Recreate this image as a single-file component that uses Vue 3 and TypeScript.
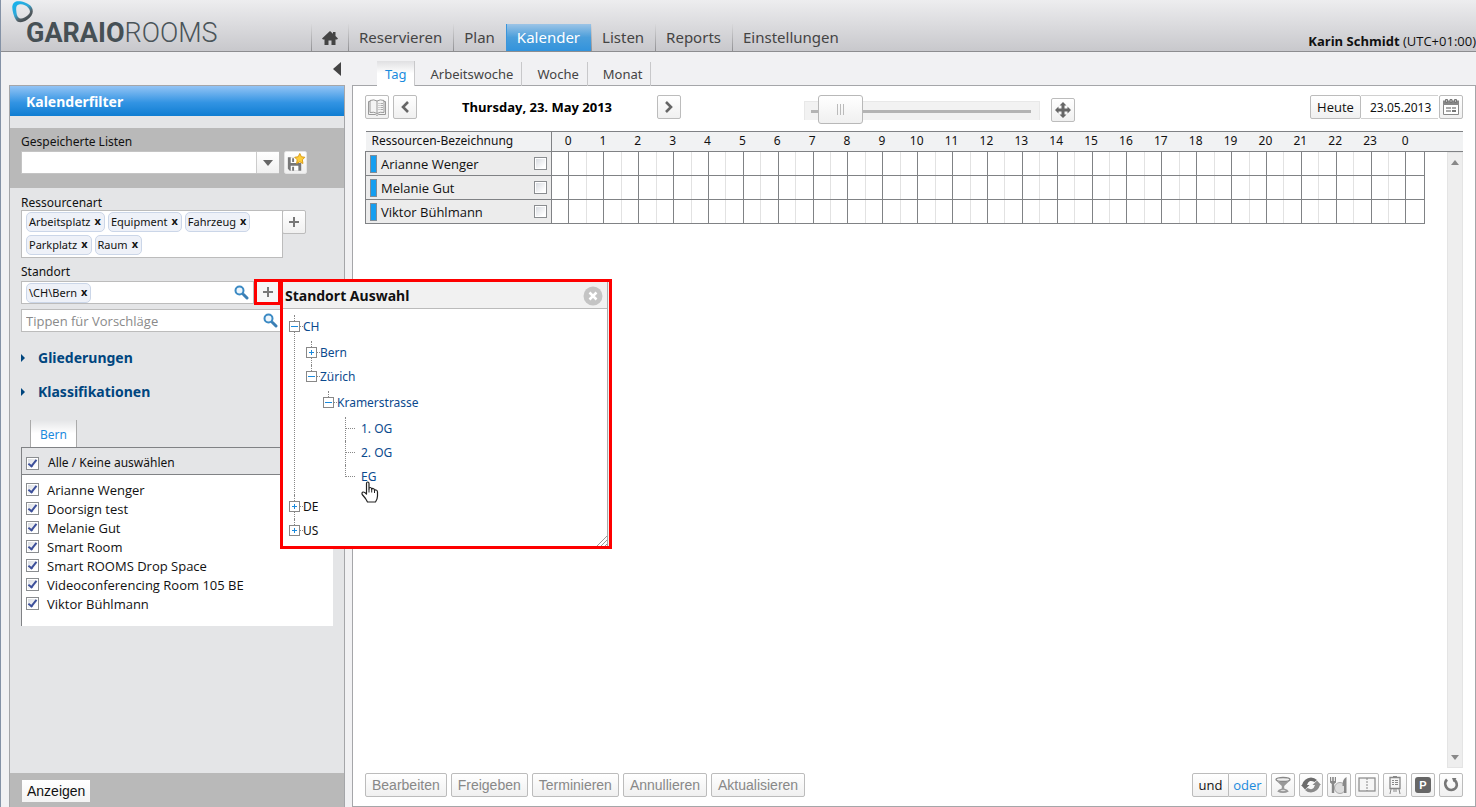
<script setup lang="ts">
import { ref } from 'vue'

interface ResourceItem { name: string; checked: boolean }

const navItems = ['Reservieren', 'Plan', 'Kalender', 'Listen', 'Reports', 'Einstellungen']
const activeNav = ref('Kalender')
const viewTabs = ['Tag', 'Arbeitswoche', 'Woche', 'Monat']
const activeView = ref('Tag')

const types = ref(['Arbeitsplatz', 'Equipment', 'Fahrzeug', 'Parkplatz', 'Raum'])
const places = ref(['\\CH\\Bern'])

const allSelected = ref(true)
const items = ref<ResourceItem[]>([
  { name: 'Arianne Wenger', checked: true },
  { name: 'Doorsign test', checked: true },
  { name: 'Melanie Gut', checked: true },
  { name: 'Smart Room', checked: true },
  { name: 'Smart ROOMS Drop Space', checked: true },
  { name: 'Videoconferencing Room 105 BE', checked: true },
  { name: 'Viktor Bühlmann', checked: true },
])

const rows = ref<ResourceItem[]>([
  { name: 'Arianne Wenger', checked: false },
  { name: 'Melanie Gut', checked: false },
  { name: 'Viktor Bühlmann', checked: false },
])
const hours = Array.from({ length: 25 }, (_, i) => i % 24)
const zoomLevel = ref(7)
const dateText = ref('23.05.2013')
const suggestion = ref('')
const savedList = ref('')
const popupOpen = ref(true)
const actions = ['Bearbeiten', 'Freigeben', 'Terminieren', 'Annullieren', 'Aktualisieren']

function toggleAll() {
  items.value.forEach((i) => { i.checked = allSelected.value })
}
function removeFrom(list: string[], name: string) {
  const at = list.indexOf(name)
  if (at >= 0) list.splice(at, 1)
}
</script>

<template>
  <div class="app">
    <header class="header">
      <a class="logo" href="#" aria-label="Garaio Rooms">
        <svg class="logo-mark" width="22" height="22" viewBox="0 0 22 22">
          <defs>
            <linearGradient id="ring" x1="0" y1="0" x2="0.7" y2="1">
              <stop offset="0" stop-color="#12b4f0" />
              <stop offset="0.5" stop-color="#2fa8d8" />
              <stop offset="0.75" stop-color="#566066" />
              <stop offset="1" stop-color="#3c4448" />
            </linearGradient>
          </defs>
          <path fill="url(#ring)" fill-rule="evenodd" d="M4 .6C8-.4 16 1.500 19.500 6C22.500 10.500 20 15.500 15.500 18.500C11 21.800 6 22.300 4 19C1.500 15 .1 9 .3 5.500C.6 3 2 1.200 4 .6ZM7 3.600C4.500 4.300 4 6 4.200 9C4.500 13 5 15.800 7 17C9.500 18.500 13 16.800 15.800 14.300C18.500 12 18.600 9.600 16.400 7C13.800 4 10 2.800 7 3.600Z" />
        </svg>
        <span class="logo-text"><b>GARAIO</b>ROOMS</span>
      </a>
      <nav class="nav">
        <a class="nav-item home" href="#" aria-label="Home">
          <svg width="16" height="16" viewBox="0 0 16 16"><path fill="#444" d="M8 1L0 8.500L1 9.500H2.500V15H6.500V10.500H9.500V15H13.500V9.500H15L16 8.500L13.500 6V2H11V3.800Z" /></svg>
        </a>
        <a v-for="n in navItems" :key="n" class="nav-item" :class="{ active: n === activeNav }" href="#" @click.prevent="activeNav = n">{{ n }}</a>
      </nav>
      <div class="user"><b>Karin Schmidt</b> (UTC+01:00)</div>
    </header>

    <div class="body">
      <div class="left">
        <div class="left-top">
          <button class="collapse" aria-label="Filter einklappen">
            <svg width="8" height="14" viewBox="0 0 8 14"><path fill="#444" d="M8 0V14L0 7Z" /></svg>
          </button>
        </div>
        <aside class="sidebar">
          <h2 class="side-title">Kalenderfilter</h2>
          <div class="saved">
            <label class="label" for="saved">Gespeicherte Listen</label>
            <div class="line">
              <div class="select-wrap">
                <select id="saved" v-model="savedList" class="select"><option value=""></option></select>
                <span class="select-arrow"><svg width="10" height="6" viewBox="0 0 10 6"><path fill="#666" d="M0 0H10L5 6Z" /></svg></span>
              </div>
              <button class="btn save" aria-label="Liste speichern">
                <svg width="22" height="22" viewBox="0 0 22 22">
                  <path fill="#777" d="M3 5H11V11H17V19H5L3 17Z" />
                  <path fill="#fff" d="M6 5H12V11H6ZM6 14H14V19H6Z" />
                  <path fill="#777" d="M7.500 6H9.500V10H7.500ZM7.500 15H9.500V19H7.500Z" />
                  <path fill="#ffce3a" stroke="#d99a12" d="M15.500 1L17.200 4.500L20.800 5L18.200 7.700L18.800 11.500L15.500 9.700L12.200 11.500L12.800 7.700L10.200 5L13.800 4.500Z" />
                </svg>
              </button>
            </div>
          </div>

          <div class="filters">
            <div class="label tight">Ressourcenart</div>
            <div class="line type-line">
              <div class="tagbox types">
                <span v-for="t in types" :key="t" class="tag">{{ t }}<button :aria-label="t + ' entfernen'" @click="removeFrom(types, t)">x</button></span>
              </div>
              <button class="btn plus" aria-label="Ressourcenart hinzufügen"><svg width="10" height="10" viewBox="0 0 10 10"><path fill="#777" d="M4 0H6V4H10V6H6V10H4V6H0V4H4Z" /></svg></button>
            </div>
            <div class="label">Standort</div>
            <div class="line place-line">
              <div class="tagbox place">
                <span v-for="t in places" :key="t" class="tag">{{ t }}<button :aria-label="t + ' entfernen'" @click="removeFrom(places, t)">x</button></span>
                <svg class="lens" width="15" height="15" viewBox="0 0 15 15"><circle cx="5.500" cy="5.500" r="4" fill="#eef6fc" stroke="#3b8ac4" stroke-width="2" /><path stroke="#3b7fb5" stroke-width="3" stroke-linecap="round" d="M9.500 9.500L13 13" /></svg>
              </div>
              <div class="anchor">
                <button class="plus marked" aria-label="Standort auswählen" @click="popupOpen = !popupOpen"><svg width="10" height="10" viewBox="0 0 10 10"><path fill="#777" d="M4 0H6V4H10V6H6V10H4V6H0V4H4Z" /></svg></button>
                <section v-if="popupOpen" class="popup" aria-label="Standort Auswahl">
                  <div class="popup-inner">
                    <div class="popup-head">
                      <h3>Standort Auswahl</h3>
                      <button class="close" aria-label="Schliessen" @click="popupOpen = false">
                        <svg width="20" height="20" viewBox="0 0 20 20"><circle cx="10" cy="10" r="9.500" fill="#c4c4c4" /><path stroke="#fff" stroke-width="2.500" d="M6.500 6.500L13.500 13.500M13.500 6.500L6.500 13.500" /></svg>
                      </button>
                    </div>
                    <ul class="tree root">
                      <li>
                        <button class="node minus" aria-label="CH zuklappen"></button><a href="#">CH</a>
                        <ul class="tree">
                          <li><button class="node add" aria-label="Bern aufklappen"></button><a href="#">Bern</a></li>
                          <li>
                            <button class="node minus" aria-label="Zürich zuklappen"></button><a href="#">Zürich</a>
                            <ul class="tree">
                              <li>
                                <button class="node minus" aria-label="Kramerstrasse zuklappen"></button><a href="#">Kramerstrasse</a>
                                <ul class="tree leaves">
                                  <li><a href="#">1. OG</a></li>
                                  <li><a href="#">2. OG</a></li>
                                  <li>
                                    <a href="#" class="hovered">EG</a>
                                    <svg class="hand" width="18" height="22" viewBox="0 0 18 22"><path fill="#fff" stroke="#222" stroke-width="1.200" stroke-linejoin="round" d="M5.500 13V2.500Q5.500 1 6.700 1Q8 1 8 2.500V8Q8 6.500 9.300 6.500Q10.700 6.500 10.700 8.500Q11 7.300 12.200 7.500Q13.500 7.700 13.500 9.500Q14 8.600 15.200 9Q16.500 9.400 16.500 11V15Q16.500 18 14.500 21H6.500L4.500 17.500L1.200 13.500Q.5 11.500 2 11Q3.500 10.800 5.500 13Z" /><path stroke="#222" d="M8 8V11.500M10.700 8.500V11.500M13.500 9.500V12" /></svg>
                                  </li>
                                </ul>
                              </li>
                            </ul>
                          </li>
                        </ul>
                      </li>
                      <li><button class="node add" aria-label="DE aufklappen"></button><a href="#" class="plain">DE</a></li>
                      <li><button class="node add" aria-label="US aufklappen"></button><a href="#" class="plain">US</a></li>
                    </ul>
                    <svg class="grip" width="10" height="10" viewBox="0 0 10 10"><path stroke="#999" d="M0 10L10 0M4 10L10 4M8 10L10 8" /></svg>
                  </div>
                </section>
              </div>
            </div>
            <div class="tagbox suggest">
              <input v-model="suggestion" type="text" aria-label="Vorschläge" placeholder="Tippen für Vorschläge" />
              <svg class="lens" width="15" height="15" viewBox="0 0 15 15"><circle cx="5.500" cy="5.500" r="4" fill="#eef6fc" stroke="#3b8ac4" stroke-width="2" /><path stroke="#3b7fb5" stroke-width="3" stroke-linecap="round" d="M9.500 9.500L13 13" /></svg>
            </div>

            <button class="fold"><svg width="4" height="8" viewBox="0 0 4 8"><path fill="#00467f" d="M0 0L4 4L0 8Z" /></svg>Gliederungen</button>
            <button class="fold"><svg width="4" height="8" viewBox="0 0 4 8"><path fill="#00467f" d="M0 0L4 4L0 8Z" /></svg>Klassifikationen</button>

            <button class="side-tab">Bern</button>
            <div class="list">
              <label class="list-head"><input v-model="allSelected" type="checkbox" @change="toggleAll" />Alle / Keine auswählen</label>
              <div class="list-body">
                <label v-for="i in items" :key="i.name" class="item"><input v-model="i.checked" type="checkbox" />{{ i.name }}</label>
              </div>
            </div>
          </div>
          <div class="side-foot"><button class="show">Anzeigen</button></div>
        </aside>
      </div>

      <main class="main">
        <div class="tabs">
          <button v-for="t in viewTabs" :key="t" class="tab" :class="{ active: t === activeView }" @click="activeView = t">{{ t }}</button>
        </div>
        <div class="panel">
          <div class="toolbar">
            <button class="btn icon" aria-label="Buchansicht">
              <svg width="20" height="18" viewBox="0 0 20 18"><path fill="#f4f4f4" stroke="#999" d="M1.500 3.500H3V2.500Q7 1 10 3Q13 1 17 2.500V3.500H18.500V16.500H11.500L10 17.500L8.500 16.500H1.500Z" /><path fill="none" stroke="#999" d="M3 3V14.500Q7 13.500 10 15.500Q13 13.500 17 14.500V3M10 3V15.500" /><path stroke="#aaa" d="M11.500 5.500H12.500M13.500 5.500H16M11.500 7.500H12.500M13.500 7.500H16M11.500 9.500H12.500M13.500 9.500H16M11.500 11.500H12.500M13.500 11.500H16" /></svg>
            </button>
            <button class="btn icon" aria-label="Zurück"><svg width="10" height="12" viewBox="0 0 10 12"><path fill="none" stroke="#666" stroke-width="2.600" d="M8 1L3 6L8 11" /></svg></button>
            <div class="day">Thursday, 23. May 2013</div>
            <button class="btn icon" aria-label="Weiter"><svg width="10" height="12" viewBox="0 0 10 12"><path fill="none" stroke="#666" stroke-width="2.600" d="M2 1L7 6L2 11" /></svg></button>
            <input v-model="zoomLevel" class="slider" type="range" min="0" max="100" aria-label="Zoom" />
            <button class="btn icon move" aria-label="Ausdehnen">
              <svg width="18" height="18" viewBox="0 0 18 18"><path fill="#666" d="M9 1L12.500 4.500H10.500V7.500H13.500V5.500L17 9L13.500 12.500V10.500H10.500V13.500H12.500L9 17L5.500 13.500H7.500V10.500H4.500V12.500L1 9L4.500 5.500V7.500H7.500V4.500H5.500Z" /></svg>
            </button>
            <div class="date-group">
              <button class="btn today">Heute</button>
              <input v-model="dateText" class="date" type="text" aria-label="Datum" />
              <button class="btn icon" aria-label="Kalender öffnen">
                <svg width="18" height="18" viewBox="0 0 18 18"><path fill="#888" d="M1 2.500H17V7H1Z" /><path fill="#fff" stroke="#888" d="M1.500 6.500H16.500V16.500H1.500Z" /><path fill="#bbb" stroke="#777" d="M3.500 1.500H5.500V4.500H3.500ZM8 1.500H10V4.500H8ZM12.500 1.500H14.500V4.500H12.500Z" /><path fill="#aaa" d="M4 9H9V11H4ZM10 9H14V11H10ZM4 12H9V14H4Z" /><path fill="#777" d="M10 12H14V14H10Z" /></svg>
              </button>
            </div>
          </div>

          <div class="schedule">
            <table class="grid">
              <colgroup>
                <col class="c-name" />
                <col v-for="n in 50" :key="n" />
                <col class="c-end" />
              </colgroup>
              <thead>
                <tr>
                  <th class="h-name" scope="col">Ressourcen-Bezeichnung</th>
                  <th v-for="(h, k) in hours" :key="k" class="h-hour" colspan="2" scope="col">{{ h }}</th>
                  <td class="h-hour"></td>
                </tr>
              </thead>
              <tbody>
                <tr v-for="r in rows" :key="r.name">
                  <th class="r-name" scope="row">
                    <label><span class="chip"></span><span class="grow">{{ r.name }}</span><input v-model="r.checked" type="checkbox" /></label>
                  </th>
                  <td v-for="n in 50" :key="n" class="slot" :class="{ strong: n % 2 === 1 || n === 50 }"></td>
                  <td class="end"></td>
                </tr>
              </tbody>
            </table>
            <div class="scroll" aria-hidden="true">
              <svg width="8" height="5" viewBox="0 0 8 5"><path fill="#888" d="M4 0L8 5H0Z" /></svg>
              <svg width="8" height="5" viewBox="0 0 8 5"><path fill="#888" d="M0 0H8L4 5Z" /></svg>
            </div>
          </div>

          <div class="bottom">
            <button v-for="a in actions" :key="a" class="btn action" disabled>{{ a }}</button>
            <div class="tools">
              <div class="join">
                <button class="btn and">und</button>
                <button class="btn or">oder</button>
              </div>
              <button class="btn icon" aria-label="Getränke"><svg width="18" height="18" viewBox="0 0 18 18"><ellipse cx="9" cy="3.500" rx="7" ry="2" fill="#eee" stroke="#888" stroke-width="1.300" /><path fill="#999" d="M2 4.500Q9 7.500 16 4.500L10.200 10V12.500Q14 13.500 14.800 15.500Q9 18.500 3.200 15.500Q4 13.500 7.800 12.500V10Z" /><path fill="#ddd" d="M6 14.500Q9 13 12 14.500Q9 16 6 14.500Z" /></svg></button>
              <button class="btn icon" aria-label="Wiederholung"><svg width="20" height="18" viewBox="0 0 20 18"><path fill="#6b6b6b" d="M1 9Q3 2 10 1.500Q13.500 1.500 16 4L13.500 6Q11 4.500 9 5Q6.800 6 6 9H8.500L4 13.500L0 9Z" /><path fill="#8a8a8a" d="M19 9Q17 16 10 16.500Q6.500 16.500 4 14L6.500 12Q9 13.500 11 13Q13.200 12 14 9H11.500L16 4.500L20 9Z" /></svg></button>
              <button class="btn icon" aria-label="Catering"><svg width="20" height="20" viewBox="0 0 20 20"><circle cx="11" cy="13" r="5.500" fill="#ddd" stroke="#aaa" /><path fill="#888" d="M1 2H2.200V6H3.200V2H4.800V6H5.800V2H7V7.500L5.200 9V18H2.800V9L1 7.500ZM13.500 10Q13.500 4 17.500 2V18H15V11H13.500Z" /></svg></button>
              <button class="btn icon" aria-label="Raumteilung"><svg width="18" height="16" viewBox="0 0 18 16"><rect x="1" y="1" width="16" height="13" fill="#f6f6f6" stroke="#888" stroke-width="1.200" /><path stroke="#888" stroke-dasharray="2 1" d="M9 1V14" /></svg></button>
              <button class="btn icon" aria-label="Flipchart"><svg width="16" height="20" viewBox="0 0 16 20"><path fill="#f6f6f6" stroke="#888" stroke-width="1.300" d="M3 2.500H13V13.500H3Z" /><path fill="none" stroke="#888" d="M5 5.500H7M8 5.500H11M5 7.500H7M8 7.500H11M5 9.500H7M8 9.500H11M4 14L3 19M7 14V17M9 14V17M12 14L13 19M6 1.500H10" /></svg></button>
              <button class="btn icon" aria-label="Parkplatz"><span class="park">P</span></button>
              <button class="btn icon" aria-label="Zurücksetzen"><svg width="16" height="16" viewBox="0 0 16 16"><path fill="none" stroke="#777" stroke-width="2.600" d="M4 2.500Q1.500 5 2.500 8.500Q4 13 8.500 13Q13 12.500 13.800 8.500Q14 4.500 10.500 2.500" /><path fill="#777" d="M9 1L13.500 1L10.500 5Z" /></svg></button>
            </div>
          </div>
        </div>
      </main>
    </div>
  </div>
</template>

<style>
body {
  margin: 0;
}
</style>

<style scoped>
* {
  box-sizing: border-box;
}
.app {
  min-height: 100vh;
  display: flex;
  flex-direction: column;
  background: #f1f1f3;
  border-left: 1px solid #8492a6;
  font: 13px/18px "Open Sans", "Noto Sans", sans-serif;
  color: #111;
}
button, input, select {
  font: inherit;
  color: inherit;
  margin: 0;
  padding: 0;
}
button {
  background: none;
  border: 0;
  white-space: nowrap;
}
a {
  color: inherit;
  text-decoration: none;
}
svg {
  display: block;
}

.header {
  height: 52px;
  display: flex;
  align-items: flex-end;
  background: linear-gradient(#ededef, #c8c8cc);
  border-bottom: 1px solid #8d8d90;
}
.logo {
  width: 310px;
  height: 51px;
  position: relative;
  padding: 17px 0 0 25px;
}
.logo-mark {
  position: absolute;
  left: 11px;
  top: 1px;
}
.logo-text {
  font: 300 27px/32px Roboto, sans-serif;
  color: #4a5459;
}
.logo-text b {
  font-weight: 700;
  color: #465055;
}
.nav {
  display: flex;
  flex: 1;
  font-family: "Noto Sans", sans-serif;
  font-size: 15px;
  line-height: 27px;
  color: #444;
}
.nav-item {
  height: 27px;
  padding: 0 11px 0 10px;
  border-style: solid;
  border-width: 0 0 0 1px;
  border-image: linear-gradient(#dcdcde, #8d8d90) 1;
}
.nav-item.home {
  padding: 6px 10px 0;
}
.nav-item.active {
  color: #fff;
  border-image: none;
  border-color: #3a95db;
  background: linear-gradient(#9cc4e6, #4a9edb 50%, #3293dc);
}
.user {
  line-height: 20px;
  white-space: nowrap;
}

.body {
  flex: 1;
  display: flex;
}
.left {
  width: 336px;
  margin-left: 8px;
  display: flex;
  flex-direction: column;
  flex-shrink: 0;
}
.left-top {
  height: 33px;
  display: flex;
  justify-content: flex-end;
  align-items: center;
  padding-right: 4px;
}
.sidebar {
  flex: 1;
  display: flex;
  flex-direction: column;
  background: #e4e5e7;
  border: 1px solid #a5a6a9;
  border-bottom: 0;
}
.side-title {
  margin: 0 0 12px;
  height: 30px;
  padding-left: 16px;
  font: bold 14px/31px "Noto Sans", sans-serif;
  color: #fff;
  background: linear-gradient(#93c4f5, #3394e3 55%, #0f7dd2);
}
.saved {
  height: 60px;
  padding: 5px 11px 0;
  background: #b9b9b9;
}
.label {
  display: block;
  height: 18px;
  font-family: "Noto Sans", sans-serif;
  font-size: 12px;
}
.label.tight {
  height: 16px;
}
.line {
  display: flex;
}
.select-wrap {
  position: relative;
  width: 258px;
  height: 23px;
  margin-right: 5px;
}
.select {
  width: 100%;
  height: 23px;
  appearance: none;
  background: #fff;
  border: 1px solid #c4c4c4;
  border-radius: 0;
}
.select-arrow {
  position: absolute;
  top: 1px;
  right: 0;
  width: 23px;
  height: 21px;
  display: flex;
  align-items: center;
  justify-content: center;
  border-left: 1px solid #ccc;
  background: linear-gradient(#fff, #f0f0f0);
  pointer-events: none;
}
.btn {
  height: 24px;
  display: flex;
  align-items: center;
  justify-content: center;
  border: 1px solid #bcbcbc;
  border-radius: 2px;
  background: linear-gradient(#fff, #f0f0f0);
}
.btn.save {
  width: 23px;
  height: 23px;
  border-color: #e4e4e4;
}
.filters {
  flex: 1;
  padding: 6px 11px 0;
}
.type-line {
  margin-bottom: 5px;
}
.tagbox {
  background: #fff;
  border: 1px solid #bcbcbc;
  display: flex;
  flex-wrap: wrap;
}
.types {
  width: 262px;
  height: 48px;
  padding: 1px 4px;
  gap: 2px 3px;
}
.tag {
  height: 20px;
  display: flex;
  align-items: center;
  padding: 0 2px;
  font-family: "Noto Sans", sans-serif;
  font-size: 11px;
  background: #eef1f8;
  border: 1px solid #cbd6e8;
  border-radius: 5px;
}
.tag button {
  padding: 0 1px 2px 4px;
  font-weight: bold;
}
.plus {
  width: 24px;
  display: flex;
  align-items: center;
  justify-content: center;
}
.btn.plus {
  margin-left: -1px;
}
.place {
  flex: 1;
  height: 23px;
  padding: 0 4px;
  align-items: center;
  justify-content: space-between;
}
.place-line {
  width: 259px;
  margin-bottom: 5px;
}
.anchor {
  position: relative;
  width: 26px;
}
.plus.marked {
  position: absolute;
  left: 0;
  top: -2px;
  width: 27px;
  height: 26px;
  border: 3px solid #fe0000;
  background: #f6f6f6;
}
.suggest {
  width: 262px;
  height: 23px;
  align-items: center;
  padding: 0 4px;
}
.suggest input {
  flex: 1;
  min-width: 0;
  border: 0;
  outline: 0;
  background: none;
}
.suggest input::placeholder {
  color: #8a8a8a;
}
.fold {
  display: flex;
  align-items: center;
  gap: 13px;
  height: 34px;
  font-family: "Noto Sans", sans-serif;
  font-size: 14px;
  font-weight: bold;
  color: #00467f;
}
.suggest + .fold {
  margin-top: 9px;
}
.side-tab {
  display: block;
  width: 47px;
  height: 27px;
  margin: 11px 0 0 9px;
  padding-top: 2px;
  font-family: "Noto Sans", sans-serif;
  font-size: 12px;
  color: #1a8add;
  border-right: 1px solid #aaa;
  border-left: 1px solid #aaa;
  background: linear-gradient(#e4e5e7, #fff 50%);
}
.list {
  width: 312px;
  background: #fff;
  border-top: 1px solid #808285;
  border-left: 1px solid #808285;
}
.list-head {
  display: flex;
  align-items: center;
  height: 27px;
  padding: 4px 0 0 4px;
  gap: 9px;
  font-family: "Noto Sans", sans-serif;
  font-size: 12px;
  background: #e4e5e7;
  border-bottom: 1px solid #808285;
}
.list-body {
  padding: 5px 0 13px 4px;
}
.item {
  display: flex;
  align-items: center;
  gap: 8px;
  height: 19px;
}
input[type="checkbox"] {
  appearance: none;
  width: 13px;
  height: 13px;
  flex-shrink: 0;
  border: 1px solid #8a8d90;
  background: linear-gradient(135deg, #d4d8de, #fff 80%);
  box-shadow: inset 0 0 0 1px #fff;
  display: grid;
  place-items: center;
}
input[type="checkbox"]:checked::after {
  content: "";
  width: 3px;
  height: 7px;
  margin-bottom: 2px;
  border: solid #3c4f9a;
  border-width: 0 2px 2px 0;
  transform: rotate(38deg);
}
.side-foot {
  height: 34px;
  padding: 7px 12px 0;
  background: #b9b9b9;
}
.show {
  height: 22px;
  padding: 0 5px;
  font: 14px/22px "Liberation Sans", sans-serif;
  background: linear-gradient(#fff, #f4f4f4);
}

.popup {
  position: absolute;
  z-index: 5;
  left: 26px;
  top: -2px;
  width: 332px;
  height: 270px;
  padding-right: 1px;
  border: 3px solid #fe0000;
  background: #f1f1f1;
  font-family: "Noto Sans", sans-serif;
}
.popup-inner {
  position: relative;
  height: 100%;
  background: #fff;
  border-right: 1px solid #aaa;
}
.popup-head {
  height: 27px;
  display: flex;
  align-items: center;
  justify-content: space-between;
  padding: 2px 4px 0 2px;
  background: #f1f1f1;
  border-bottom: 1px solid #bbb;
}
.popup-head h3 {
  margin: 0;
  font-size: 14px;
}
.tree {
  list-style: none;
  margin: 0;
  padding: 2px 0 2px 17px;
  font-size: 12px;
  line-height: 24px;
  color: #0b4a8e;
}
.tree.root {
  padding: 6px 0 0 6px;
}
.tree li {
  position: relative;
}
.tree li::before {
  content: "";
  position: absolute;
  left: 5px;
  top: 0;
  bottom: 0;
  border-left: 1px dotted #888;
}
.tree li:last-child::before {
  bottom: auto;
  height: 12px;
}
.node {
  position: relative;
  width: 11px;
  height: 11px;
  margin-right: 3px;
  vertical-align: 0;
  border: 1px solid #888;
  background: linear-gradient(#1a8add, #1a8add) center / 7px 1px no-repeat #fff;
}
.node.add {
  background: linear-gradient(#1a8add, #1a8add) center / 5px 1px no-repeat, linear-gradient(#1a8add, #1a8add) center / 1px 5px no-repeat #fff;
}
.node::after {
  content: "";
  position: absolute;
  left: 10px;
  top: 4px;
  width: 3px;
  border-top: 1px dotted #888;
}
.plain {
  color: #111;
}
.leaves li {
  padding-left: 21px;
}
.leaves li::after {
  content: "";
  position: absolute;
  left: 6px;
  top: 11px;
  width: 9px;
  border-top: 1px dotted #888;
}
.hand {
  position: absolute;
  left: 21px;
  top: 16px;
}
.grip {
  position: absolute;
  right: 0;
  bottom: 0;
}

.main {
  flex: 1;
  min-width: 0;
  display: flex;
  flex-direction: column;
  margin-left: 7px;
}
.tabs {
  display: flex;
  align-items: flex-end;
  height: 34px;
  padding-left: 25px;
  margin-bottom: -1px;
  font-family: "Noto Sans", sans-serif;
  color: #444;
}
.tab {
  position: relative;
  height: 24px;
  padding: 0 8px 0 15px;
  border-right: 1px solid #c8c8ca;
}
.tab.active {
  height: 25px;
  padding: 0 8px;
  color: #1a8add;
  background: linear-gradient(#e0e0e2, #fff 50%);
}
.panel {
  flex: 1;
  display: flex;
  flex-direction: column;
  padding: 9px 12px;
  background: #fff;
  border: 1px solid #a5a6a9;
}
.toolbar {
  display: flex;
  align-items: flex-start;
  height: 36px;
}
.icon {
  width: 24px;
}
.toolbar .icon + .icon {
  margin-left: 4px;
}
.day {
  width: 240px;
  text-align: center;
  font-weight: bold;
  line-height: 24px;
  color: #000;
}
.slider {
  appearance: none;
  width: 236px;
  height: 31px;
  margin-left: 123px;
  background: none;
}
.slider::-webkit-slider-runnable-track {
  height: 19px;
  border: 1px solid #e8e8e8;
  border-bottom: 0;
  background: linear-gradient(#b4b4b4, #b4b4b4) 6px 8px / 220px 3px no-repeat #f2f2f2;
}
.slider::-webkit-slider-thumb {
  appearance: none;
  width: 45px;
  height: 29px;
  margin-top: -7px;
  border: 1px solid #b8b8b8;
  border-radius: 3px;
  background:
    linear-gradient(#bbb, #bbb) 18px 8px / 1px 11px no-repeat,
    linear-gradient(#bbb, #bbb) 21px 8px / 1px 11px no-repeat,
    linear-gradient(#bbb, #bbb) 24px 8px / 1px 11px no-repeat,
    linear-gradient(#fff, #f0f0f0);
}
.move {
  margin: 3px 0 0 11px;
}
.date-group {
  display: flex;
  margin-left: auto;
}
.today {
  width: 51px;
}
.date {
  width: 77px;
  height: 24px;
  margin-right: 1px;
  padding: 0 4px 0 9px;
  border: solid #d0d0d0;
  border-width: 1px 0;
  font-family: "Noto Sans", sans-serif;
  font-size: 12px;
}
.schedule {
  position: relative;
  flex: 1;
}
.grid {
  width: 100%;
  table-layout: fixed;
  border-collapse: collapse;
}
.grid th, .grid td {
  padding: 0;
  font-weight: normal;
}
.c-name {
  width: 186px;
}
.c-end {
  width: 39px;
}
.grid thead tr {
  height: 20px;
  background: #f1f2f3;
}
.grid thead th {
  height: 20px;
  line-height: 17px;
  padding: 0 2px 2px 0;
  font-family: "Noto Sans", sans-serif;
  font-size: 12px;
}
.h-name {
  text-align: left;
  border: solid #808285;
  border-width: 1px 1px 1px 0;
  text-indent: 6px;
}
.h-hour {
  border: solid #808285;
  border-width: 1px 0;
}
.grid tbody tr {
  height: 24px;
}
.r-name {
  background: #ececec;
  border: 1px solid #808285;
}
.r-name label {
  display: flex;
  align-items: center;
  height: 23px;
  padding: 0 4px;
}
.chip {
  width: 7px;
  height: 18px;
  margin-right: 4px;
  background: #149ef0;
  border: 1px solid #7f8c98;
}
.grow {
  flex: 1;
  text-align: left;
}
.slot {
  border: solid #808285;
  border-width: 1px 0;
  border-right: 1px solid #e2e2e2;
}
.slot.strong {
  border-right: 1px solid #808285;
}
.scroll {
  position: absolute;
  top: 21px;
  right: 0;
  bottom: 5px;
  width: 16px;
  padding: 7px 3px;
  display: flex;
  flex-direction: column;
  justify-content: space-between;
  background: #eee;
  border: 1px solid #e4e4e4;
}
.bottom {
  display: flex;
  gap: 4px;
}
.action {
  padding: 0 6px;
  color: #888;
  font: 14px/22px "Liberation Sans", sans-serif;
}
.tools {
  display: flex;
  gap: 4px;
  margin-left: auto;
}
.join {
  display: flex;
}
.and {
  width: 37px;
  border-radius: 2px 0 0 2px;
}
.or {
  width: 38px;
  border-left: 0;
  border-radius: 0 2px 2px 0;
  color: #1a8add;
}
.park {
  width: 16px;
  height: 16px;
  border-radius: 3px;
  background: #666;
  color: #fff;
  font: bold 11px/16px "Liberation Sans", sans-serif;
}
</style>
